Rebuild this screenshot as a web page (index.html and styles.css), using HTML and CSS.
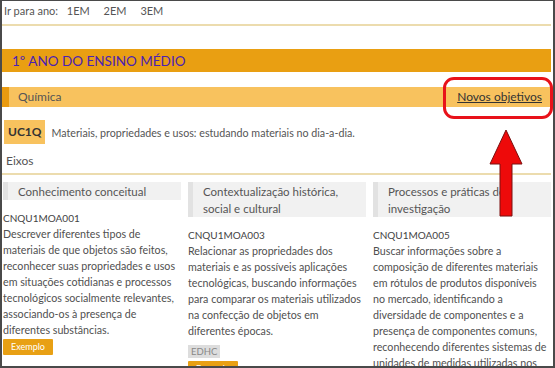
FILE: index.html
```html
<!DOCTYPE html>
<html lang="pt">
<head>
	<meta charset="UTF-8">
	<title>Objetivos - Química</title>
	<link rel="stylesheet" href="styles.css">
</head>
<body>
	<div id="page">
		<div class="anos">
			Ir para ano:
			<a href="#">1EM</a>
			<a href="#">2EM</a>
			<a href="#">3EM</a>
		</div>
		<h2 class="ano">1º ANO DO ENSINO MÉDIO</h2>
		<div class="disciplina">
			<span>Química</span>
			<a href="#" class="novos">Novos objetivos</a>
		</div>
		<div class="uc">
			<span class="uc-cod">UC1Q</span>
			<span class="uc-nome">Materiais, propriedades e usos: estudando materiais no dia-a-dia.</span>
		</div>
		<div class="eixos">Eixos</div>
		<div class="colunas">
			<div class="coluna">
				<h3>Conhecimento conceitual</h3>
				<p class="cod">CNQU1MOA001</p>
				<p class="desc">Descrever diferentes tipos de materiais de que objetos são feitos, reconhecer suas propriedades e usos em situações cotidianas e processos tecnológicos socialmente relevantes, associando-os à presença de diferentes substâncias.</p>
				<span class="btn">Exemplo</span>
			</div>
			<div class="coluna">
				<h3>Contextualização histórica, social e cultural</h3>
				<p class="cod">CNQU1MOA003</p>
				<p class="desc">Relacionar as propriedades dos materiais e as possíveis aplicações tecnológicas, buscando informações para comparar os materiais utilizados na confecção de objetos em diferentes épocas.</p>
				<span class="tag">EDHC</span>
				<span class="btn">Exemplo</span>
			</div>
			<div class="coluna">
				<h3>Processos e práticas de investigação</h3>
				<p class="cod">CNQU1MOA005</p>
				<p class="desc">Buscar informações sobre a composição de diferentes materiais em rótulos de produtos disponíveis no mercado, identificando a diversidade de componentes e a presença de componentes comuns, reconhecendo diferentes sistemas de unidades de medidas utilizadas nos rótulos.</p>
			</div>
		</div>
		<!-- marcação em vermelho por cima da tela -->
		<div class="destaque"></div>
		<svg class="seta" width="40" height="90" viewBox="0 0 40 90">
			<polygon points="20,2 36,36 26,36 26,88 14,88 14,36 4,36" fill="#ee0a0a" stroke="#7a1010" stroke-width="1"/>
		</svg>
	</div>
</body>
</html>
```

FILE: styles.css
```css
*{padding: 0;margin: 0;}
body{
	font-family: Lato, "Open Sans", sans-serif;
	color: #555;
	background: #fff;
}
#page{
	position: relative;
	height: 368px;
	box-sizing: border-box;
	border: 2px solid #4a4a4a;
	border-top-width: 1px;
	overflow: hidden;
	font-size: 12px;
}
.anos{
	padding: 2px 2px 5px;
	font-size: 11px;
	line-height: 16px;
	border-bottom: 2px solid #ecdcae;
	margin-right: 2px;
}
.anos a{
	color: #555;
	text-decoration: none;
	margin-left: 11px;
}
.anos a:first-child{
	margin-left: 6px;
}
.ano{
	margin: 23px 2px 0 0;
	height: 23px;
	line-height: 24px;
	padding-left: 10px;
	background: #e99f12;
	color: #4b22b3;
	font-size: 13.5px;
	font-weight: normal;
}
.disciplina{
	display: flex;
	justify-content: space-between;
	margin: 15px 2px 0 0;
	height: 20px;
	line-height: 20px;
	background: #f8c25e;
	border-left: 7px solid #e99a10;
	padding: 0 9px 0 9px;
}
.novos{
	color: #333;
	text-decoration: underline;
}
.uc{
	display: flex;
	align-items: center;
	gap: 7px;
	margin-top: 13px;
	padding-left: 2px;
}
.uc-cod{
	background: #f8c25e;
	color: #333;
	font-weight: bold;
	padding: 0 3px 0 4px;
	line-height: 24px;
}
.uc-nome{
	font-size: 10.7px;
}
.eixos{
	margin: 8px 2px 0 0;
	padding: 0 4px 3px;
	line-height: 18px;
	border-bottom: 2px solid #ecdcae;
}
.colunas{
	display: grid;
	grid-template-columns: 1fr 1fr 1fr;
	gap: 7px;
	padding: 7px 2px 0 1px;
}
.coluna h3{
	font-size: 11.5px;
	font-weight: normal;
	background: #f1f1f1;
	border-left: 5px solid #e2e2e2;
	padding: 1px 8px 0 10px;
	line-height: 17px;
}
.cod{
	font-size: 10px;
	color: #444;
	margin-top: 10px;
	line-height: 16px;
}
.desc{
	font-size: 10.7px;
	line-height: 16px;
	color: #505050;
}
.btn{
	display: inline-block;
	margin-top: 1px;
	background: #e8a014;
	color: #fff;
	font-size: 9px;
	padding: 0 8px;
	line-height: 16px;
	border-radius: 1px;
}
.coluna:first-child{
	border-bottom: 2px solid #ecdcae;
	padding-bottom: 6px;
}
.tag{
	display: block;
	width: max-content;
	margin-top: 6px;
	background: #ddd;
	color: #888;
	font-size: 9.5px;
	padding: 0 3px;
	line-height: 13px;
}
.tag + .btn{
	margin-top: 3px;
}
.destaque{
	position: absolute;
	left: 441px;
	top: 76px;
	width: 104px;
	height: 36px;
	border: 3px solid #e8121a;
	border-radius: 11px;
}
.seta{
	position: absolute;
	left: 484px;
	top: 127px;
}
```
